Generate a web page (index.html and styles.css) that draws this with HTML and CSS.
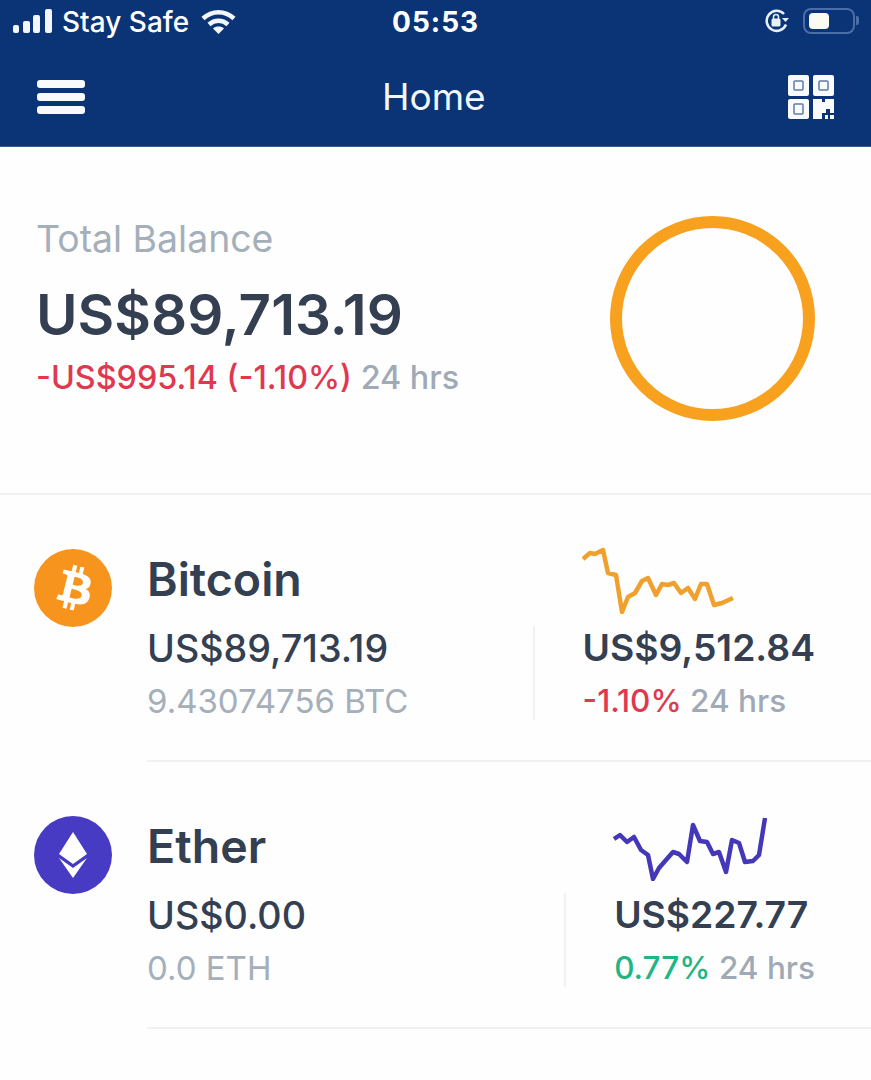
FILE: index.html
```html
<!DOCTYPE html>
<html lang="en">

<head>
    <meta charset="UTF-8">
    <meta name="viewport" content="width=device-width, initial-scale=1.0">
    <title>Home</title>
    <link rel="stylesheet" href="styles.css">
</head>

<body>

    <div class="header">
        <div class="status">
            <div class="status-left">
                <svg class="signal" width="39" height="24" viewBox="0 0 39 24">
                    <rect x="0" y="16" width="6" height="8" rx="2"></rect>
                    <rect x="10" y="12" width="7" height="12" rx="2"></rect>
                    <rect x="20" y="6" width="7" height="18" rx="2"></rect>
                    <rect x="32" y="0" width="7" height="24" rx="2"></rect>
                </svg>
                <span class="carrier">Stay Safe</span>
                <svg class="wifi" width="35" height="26" viewBox="0 0 35 26">
                    <path d="M2 9.500C11 1 24 1 33 9.500"></path>
                    <path d="M8 15.500C13.500 10.500 21.500 10.500 27 15.500"></path>
                    <path d="M17.500 25l-5.500-5.500c3-2.600 8-2.600 11 0z" class="wifi-dot"></path>
                </svg>
            </div>
            <div class="time">05:53</div>
            <div class="status-right">
                <svg width="26" height="24" viewBox="0 0 26 24">
                    <path class="lock-ring" d="M22 15.500A10 10 0 1 1 20 5"></path>
                    <path class="lock-arrow" d="M18 9h7l-3.500 4z"></path>
                    <rect class="lock-body" x="7.500" y="9.500" width="9" height="8" rx="1.500"></rect>
                    <path class="lock-hook" d="M9.500 10V8a2.500 2.500 0 0 1 5 0v2"></path>
                </svg>
                <div class="battery">
                    <div class="battery-level"></div>
                </div>
                <div class="battery-tip"></div>
            </div>
        </div>
        <div class="toolbar">
            <div class="menu">
                <div class="menu-line"></div>
                <div class="menu-line"></div>
                <div class="menu-line"></div>
            </div>
            <div class="title">Home</div>
            <svg class="qr" width="46" height="44" viewBox="0 0 46 44">
                <rect x="0" y="0" width="21" height="21" rx="2"></rect>
                <rect x="25" y="0" width="21" height="21" rx="2"></rect>
                <rect x="0" y="24" width="21" height="20" rx="2"></rect>
                <rect class="qr-hole" x="6" y="6" width="9" height="9" rx="1"></rect>
                <rect class="qr-hole" x="31" y="6" width="9" height="9" rx="1"></rect>
                <rect class="qr-hole" x="6" y="29" width="9" height="10" rx="1"></rect>
                <path d="M25 24h9v3h3v-3h9v14h-4v-4h-4v4h-4v6h-9zM37 40h3v4h-3zM42 40h4v4h-4z"></path>
            </svg>
        </div>
    </div>

    <div class="balance">
        <div class="balance-text">
            <div class="balance-label">Total Balance</div>
            <div class="balance-amount">US$89,713.19</div>
            <div class="balance-change"><span class="down">-US$995.14 (-1.10%)</span> <span class="muted">24 hrs</span></div>
        </div>
        <div class="ring"></div>
    </div>

    <ul class="coins">
        <li class="coin">
            <svg class="coin-icon" width="78" height="78" viewBox="0 0 78 78">
                <circle cx="39" cy="39" r="39" fill="#f7941d"></circle>
                <g transform="translate(4.800 3.300) scale(3)">
                    <path fill="#fff" fill-rule="evenodd" d="M17.288 10.29c.24-1.59-.974-2.45-2.64-3.03l.54-2.153-1.315-.33-.525 2.107c-.345-.087-.705-.167-1.064-.25l.526-2.127-1.32-.33-.54 2.165c-.285-.067-.565-.132-.84-.2l-1.815-.45-.35 1.407s.975.225.955.236c.535.136.63.486.615.766l-1.477 5.92c-.075.166-.24.406-.614.314.015.02-.96-.24-.96-.24l-.66 1.51 1.71.426.93.242-.54 2.19 1.32.327.54-2.17c.36.1.705.19 1.05.273l-.51 2.154 1.32.33.545-2.19c2.24.427 3.93.257 4.64-1.774.57-1.637-.03-2.58-1.217-3.196.854-.193 1.5-.76 1.68-1.93h.01zm-3.01 4.22c-.404 1.64-3.157.75-4.05.53l.72-2.9c.896.23 3.757.67 3.33 2.37zm.41-4.24c-.37 1.49-2.662.735-3.405.55l.654-2.64c.744.18 3.137.524 2.75 2.084v.006z"></path>
                </g>
            </svg>
            <div class="coin-main">
                <div class="coin-name">Bitcoin</div>
                <div class="coin-value">US$89,713.19</div>
                <div class="coin-amount">9.43074756 BTC</div>
            </div>
            <div class="coin-side">
                <svg class="chart" width="156" height="68" viewBox="0 0 156 68">
                    <polyline stroke="#f0a02c" points="1,13 8,7 13,8 21,4 26,27 34,29 40,66 46,51 53,47 60,35 66,32 74,49 80,38 86,39 92,37 99,47 106,42 113,53 119,38 125,38 132,59 140,57 151,52"></polyline>
                </svg>
                <div class="coin-stats">
                    <div class="coin-price">US$9,512.84</div>
                    <div class="coin-change"><span class="down">-1.10%</span> <span class="muted">24 hrs</span></div>
                </div>
            </div>
        </li>
        <li class="coin">
            <svg class="coin-icon" width="78" height="78" viewBox="0 0 78 78">
                <circle cx="39" cy="39" r="39" fill="#473bc4"></circle>
                <polygon fill="#fff" points="39,16 53,38 39,48 25,38"></polygon>
                <polygon fill="#fff" points="25,42 39,52 53,42 39,62"></polygon>
            </svg>
            <div class="coin-main">
                <div class="coin-name">Ether</div>
                <div class="coin-value">US$0.00</div>
                <div class="coin-amount">0.0 ETH</div>
            </div>
            <div class="coin-side">
                <svg class="chart" width="156" height="68" viewBox="0 0 156 68">
                    <polyline stroke="#4437b8" points="1,26 7,22 14,29 21,24 28,37 35,42 40,66 46,55 53,47 60,39 66,41 74,49 80,12 87,28 94,29 100,41 106,39 113,59 119,27 126,30 132,49 140,48 146,42 152,5"></polyline>
                </svg>
                <div class="coin-stats">
                    <div class="coin-price">US$227.77</div>
                    <div class="coin-change"><span class="up">0.77%</span> <span class="muted">24 hrs</span></div>
                </div>
            </div>
        </li>
    </ul>

</body>

</html>
```

FILE: styles.css
```css
* {
    padding: 0px;
    margin: 0px;
    list-style: none;
    box-sizing: border-box;
}

body {
    height: 100vh;
    overflow: hidden;
    background-color: #fefefe;
    font-family: "Inter", "Liberation Sans", sans-serif;
    color: #353f52;
}

/* top bar */
.header {
    height: 147px;
    background-color: #0a3476;
    color: #fff;
    border-bottom: 1px solid #3a5d96;
}

.status {
    display: grid;
    grid-template-columns: 1fr 1fr;
    position: relative;
    height: 45px;
    padding: 9px 12px 0 13px;
}

.status-left {
    display: flex;
    align-items: flex-start;
}

.signal {
    fill: #f2f6fb;
}

.carrier {
    margin-left: 10px;
    font-size: 28px;
    line-height: 27px;
    font-weight: 500;
}

.wifi {
    margin-left: 12px;
}

.wifi path {
    fill: none;
    stroke: #f2f6fb;
    stroke-width: 4.500;
}

.wifi .wifi-dot {
    fill: #f2f6fb;
    stroke: none;
}

.time {
    position: absolute;
    left: 392px;
    top: 8px;
    font-size: 28px;
    line-height: 29px;
    font-weight: 700;
    letter-spacing: 1px;
}

.status-right {
    display: flex;
    justify-content: flex-end;
    align-items: flex-start;
    grid-column: 2;
}

.status-right svg {
    margin-right: 13px;
}

.lock-ring {
    fill: none;
    stroke: #e6f0f8;
    stroke-width: 2.500;
}

.lock-arrow,
.lock-body {
    fill: #e6f0f8;
}

.lock-hook {
    fill: none;
    stroke: #e6f0f8;
    stroke-width: 1.500;
}

.battery {
    width: 52px;
    height: 26px;
    margin-top: -1px;
    padding: 3px 4px;
    border: 2px solid #4a6ea5;
    border-radius: 8px;
}

.battery-level {
    width: 20px;
    height: 100%;
    background-color: #fbfbf2;
    border-radius: 4px;
}

.battery-tip {
    width: 3px;
    height: 9px;
    margin: 7px 0 0 1px;
    background-color: #4a6ea5;
    border-radius: 0 2px 2px 0;
}

.toolbar {
    display: flex;
    justify-content: space-between;
    align-items: center;
    position: relative;
    height: 101px;
    padding: 2px 37px 0;
}

.menu {
    display: flex;
    flex-direction: column;
    gap: 5px;
    width: 48px;
}

.menu-line {
    height: 8px;
    background-color: #f8fafc;
    border-radius: 3px;
}

.title {
    position: absolute;
    left: 382px;
    top: 30px;
    font-size: 37px;
    line-height: 44px;
    color: #f2f6fb;
}

.qr {
    fill: #f8fafc;
}

.qr .qr-hole {
    fill: none;
    stroke: #5f7ba6;
    stroke-width: 1.500;
}

/* total balance */
.balance {
    display: flex;
    justify-content: space-between;
    align-items: flex-start;
    height: 348px;
    padding: 69px 56px 0 36px;
    border-bottom: 2px solid #eff1f3;
}

.balance-label {
    margin-top: 1px;
    font-size: 37.400px;
    line-height: 44px;
    color: #a5afba;
}

.balance-amount {
    margin-top: 22px;
    font-size: 56.500px;
    line-height: 64px;
    font-weight: 600;
}

.balance-change {
    margin-top: 12px;
    font-size: 32.300px;
    line-height: 38px;
    font-weight: 500;
}

.ring {
    width: 205px;
    height: 205px;
    border: 12px solid #f7a11f;
    border-radius: 50%;
}

.down {
    color: #e0384f;
}

.up {
    color: #1fb585;
}

.muted {
    color: #a0aab6;
}

/* coin list */
.coin {
    display: flex;
    align-items: flex-start;
    height: 267px;
    padding-left: 34px;
}

.coin-icon {
    flex-shrink: 0;
    margin-top: 54px;
}

.coin-main {
    flex: 1;
    align-self: stretch;
    margin-left: 35px;
    padding-top: 56px;
    border-bottom: 2px solid #eff1f3;
}

.coin-name {
    font-size: 46.500px;
    line-height: 56px;
    font-weight: 600;
}

.coin-value {
    margin-top: 20px;
    font-size: 37.700px;
    line-height: 42px;
    font-weight: 500;
}

.coin-amount {
    margin-top: 11px;
    font-size: 33px;
    line-height: 42px;
    color: #a5afba;
}

.coin-side {
    display: flex;
    flex-direction: column;
    align-self: stretch;
    padding: 51px 56px 0 0;
    border-bottom: 2px solid #eff1f3;
}

.chart {
    display: block;
    margin-left: 49px;
}

.chart polyline {
    fill: none;
    stroke-width: 4.500;
    stroke-linejoin: round;
}

.coin-stats {
    height: 94px;
    margin-top: 12px;
    padding-left: 48px;
    border-left: 2px solid #eff1f3;
}

.coin-price {
    margin-top: 1px;
    font-size: 37.300px;
    line-height: 42px;
    font-weight: 600;
}

.coin-change {
    margin-top: 11px;
    font-size: 31.500px;
    line-height: 42px;
    font-weight: 500;
}
```
